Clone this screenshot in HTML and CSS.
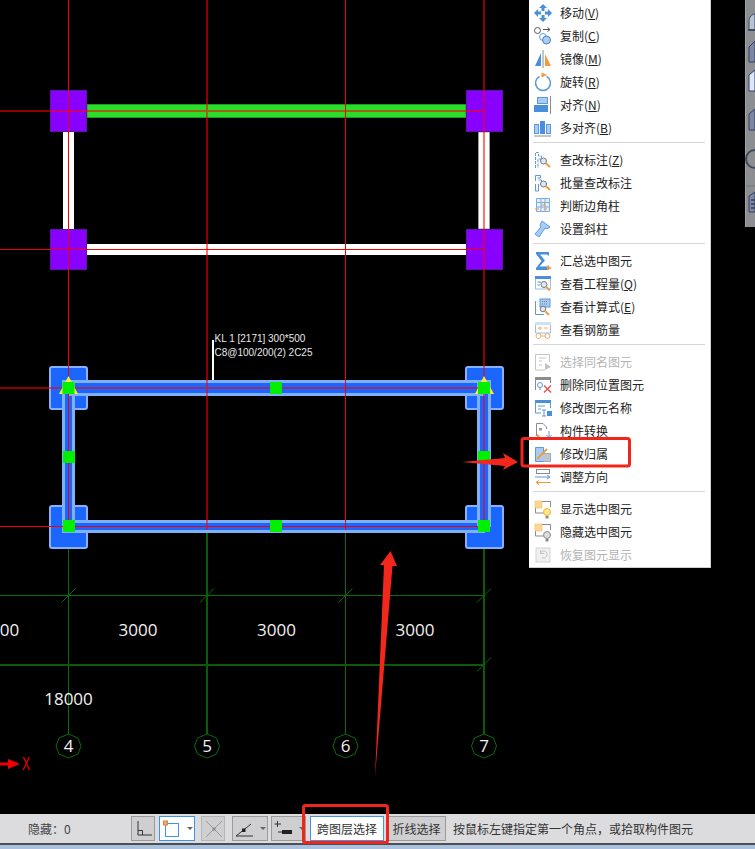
FILE: index.html
```html
<!DOCTYPE html>
<html lang="zh-CN">
<head>
<meta charset="utf-8">
<title>构件选择</title>
<link rel="stylesheet" href="styles.css">
</head>
<body>
<div class="app">
  <main class="stage">
    <svg class="canvas" width="755" height="814" viewBox="0 0 755 814">
      <!-- axis lines, lower green part -->
      <g class="axis-green">
        <path d="M68.5 530V734M345.5 530V734"/>
        <path class="thick" d="M207 530V734M484 530V734"/>
        <path d="M0 595.5H484"/>
        <path class="thick" d="M0 665H484"/>
        <path d="M61.5 602.5l14-14M200 602.5l14-14M338.5 602.5l14-14M477 602.5l14-14M477 671.5l14-14"/>
      </g>
      <!-- axis bubbles -->
      <g class="bubble">
        <polygon points="68.5,734 78,738 81,746 78,754 68.5,758 59,754 56,746 59,738"/>
        <polygon points="207,734 216.500,738 219.500,746 216.500,754 207,758 197.500,754 194.500,746 197.500,738"/>
        <polygon points="345.500,734 355,738 358,746 355,754 345.500,758 336,754 333,746 336,738"/>
        <polygon points="484,734 493.500,738 496.500,746 493.500,754 484,758 474.500,754 471.500,746 474.500,738"/>
      </g>
      <!-- upper frame -->
      <rect class="beam-green" x="87" y="104.500" width="379" height="13"/>
      <rect class="beam-white" x="87" y="244" width="379" height="11"/>
      <rect class="beam-white" x="63" y="132" width="11" height="97"/>
      <rect class="beam-white edged" x="478.500" y="132" width="11" height="97"/>
      <rect class="col-purple" x="50.500" y="90.500" width="36" height="41"/>
      <rect class="col-purple" x="466.500" y="90.500" width="36" height="41"/>
      <rect class="col-purple" x="50.500" y="229.500" width="36" height="40"/>
      <rect class="col-purple" x="466.500" y="229.500" width="36" height="40"/>
      <!-- lower selected frame -->
      <rect class="sel" x="50" y="367" width="37" height="42" rx="2"/>
      <rect class="sel" x="466" y="367" width="37" height="42" rx="2"/>
      <rect class="sel" x="50" y="506" width="37" height="42" rx="2"/>
      <rect class="sel" x="466" y="506" width="37" height="42" rx="2"/>
      <g class="beam-fill">
        <rect x="63.500" y="381.500" width="10" height="150"/>
        <rect x="478.500" y="381.500" width="11" height="144"/>
        <rect x="69.500" y="381.500" width="414" height="13"/>
        <rect x="69.500" y="521.500" width="414" height="10"/>
      </g>
      <g class="beam-edge">
        <rect x="63.500" y="381.500" width="10" height="150"/>
        <rect x="478.500" y="381.500" width="11" height="144"/>
        <rect x="69.500" y="381.500" width="414" height="13"/>
        <rect x="69.500" y="521.500" width="414" height="10"/>
      </g>
      <!-- axis lines over the members -->
      <g class="axis-red">
        <path d="M68.500 0V530M345.500 0V530M0 249.500H484M0 526.500H484"/>
      </g>
      <g class="axis-dark">
        <path d="M207 0V530M484 0V530M0 111H484M0 388H484"/>
      </g>
      <!-- handles -->
      <path class="tri-yellow" d="M68.500 376L78 394H59Z"/>
      <path class="tri-yellow" d="M484 376L494 394H475Z"/>
      <g class="handle">
        <rect x="62.500" y="382" width="12" height="12"/>
        <rect x="270" y="382" width="12" height="12"/>
        <rect x="478" y="382" width="12" height="12"/>
        <rect x="63" y="451" width="12" height="12"/>
        <rect x="478" y="451" width="12" height="12"/>
        <rect x="63" y="520" width="12" height="12"/>
        <rect x="270" y="520" width="12" height="12"/>
        <rect x="478" y="520" width="12" height="12"/>
      </g>
      <!-- annotation -->
      <path class="leader" d="M213 340V380"/>
      <text class="note" x="214.500" y="342">KL 1 [2171] 300*500</text>
      <text class="note" x="214.500" y="356">C8@100/200(2) 2C25</text>
      <!-- dimensions -->
      <g class="dim">
        <text x="9.500" y="636">00</text>
        <text x="138" y="636">3000</text>
        <text x="276.500" y="636">3000</text>
        <text x="415" y="636">3000</text>
        <text x="68.500" y="705">18000</text>
        <text x="68.500" y="752">4</text>
        <text x="207" y="752">5</text>
        <text x="345.500" y="752">6</text>
        <text x="484" y="752">7</text>
      </g>
      <!-- coordinate marker -->
      <path class="axis-arrow" d="M0 762.500H8V759L20 764L8 769V765.500H0Z"/>
      <text class="axis-x" x="22" y="770" textLength="8" lengthAdjust="spacingAndGlyphs">X</text>
    </svg>

    <aside class="side-panel">
      <svg width="10" height="227" viewBox="0 0 10 227">
        <path class="pi-fill" d="M4 21C4 17 7 14 10 14V30H4Z"/>
        <path class="pi-line" d="M3 30H10"/>
        <path class="pi-box" d="M4 62V47L10 41V62Z"/>
        <path class="pi-active" d="M4 91V75L10 70V91Z"/>
        <path class="pi-box" d="M4 130V114L10 109V130Z"/>
        <path class="pi-line" d="M10 150A9 9 0 0 0 10 168"/>
        <path class="pi-sep" d="M1 186H10"/>
        <path class="pi-box" d="M4 212V196L10 192V212Z"/>
        <path class="pi-dots" d="M6 200H10M6 204H10M6 208H10"/>
      </svg>
    </aside>

    <nav class="menu">
      <div class="item"><svg class="ico" viewBox="0 0 20 20"><path class="b" d="M10 1l4 4h-2.500v3h-3V5H6zM10 19l-4-4h2.500v-3h3v3H14zM1 10l4-4v2.500h3v3H5V14zM19 10l-4 4v-2.500h-3v-3h3V6z"/></svg><span>移动(<u>V</u>)</span></div>
      <div class="item"><svg class="ico" viewBox="0 0 20 20"><circle class="k" cx="4.500" cy="4.500" r="3"/><path class="k" d="M10 3.500h6.500M14.500 1.500l2.500 2-2.500 2"/><circle class="bl" cx="10" cy="11" r="3.500"/><circle class="blf" cx="13.500" cy="14" r="4"/></svg><span>复制(<u>C</u>)</span></div>
      <div class="item"><svg class="ico" viewBox="0 0 20 20"><path class="b" d="M2 17L8 4V17Z"/><path class="o" d="M12 5L18 17H12Z"/><path class="g" d="M10 1V19"/></svg><span>镜像(<u>M</u>)</span></div>
      <div class="item"><svg class="ico" viewBox="0 0 20 20"><path class="bl2" d="M6.500 4.300A7.500 7.500 0 1 0 13.500 4.300"/><path class="o" d="M8.500 0.500L14 3L8.500 5.500Z"/></svg><span>旋转(<u>R</u>)</span></div>
      <div class="item"><svg class="ico" viewBox="0 0 20 20"><rect class="lb" x="4.500" y="2.500" width="10" height="6"/><rect class="b" x="1" y="10" width="14" height="7"/><path class="g" d="M17.500 1V19"/></svg><span>对齐(<u>N</u>)</span></div>
      <div class="item"><svg class="ico" viewBox="0 0 20 20"><rect class="lb" x="1.500" y="6.500" width="4" height="9"/><rect class="b" x="7" y="3" width="5" height="13"/><rect class="lb" x="13.500" y="6.500" width="4" height="9"/><path class="g" d="M1 18H18"/></svg><span>多对齐(<u>B</u>)</span></div>
      <div class="sep"></div>
      <div class="item"><svg class="ico" viewBox="0 0 20 20"><path class="bl" d="M2.500 18V2.500H5.500V6H8.500V9H5V18" stroke-dasharray="3 1"/><circle class="glass" cx="10.500" cy="11" r="3"/><path class="oh" d="M13 13.500L17 17"/></svg><span>查改标注(<u>Z</u>)</span></div>
      <div class="item"><svg class="ico" viewBox="0 0 20 20"><path class="bl" d="M2.500 8V2.500H7.500V5H4.500M5.500 7H8.500V9M2.500 11V18H5.500V11"/><circle class="glass" cx="10.500" cy="11" r="3"/><path class="oh" d="M13 13.500L17 17"/></svg><span>批量查改标注</span></div>
      <div class="item"><svg class="ico" viewBox="0 0 20 20"><path class="grid" d="M3.500 2.500H16.500V15.500H3.500ZM3.500 6.500H16.500M3.500 11H16.500M8 2.500V15.500M12 2.500V15.500"/><path class="oh2" d="M2 13H6M8 9H11M11 13H14M11.500 7V11"/></svg><span>判断边角柱</span></div>
      <div class="item"><svg class="ico" viewBox="0 0 20 20"><path class="lbw" d="M9 2L17 8L14 10L12 9L6 18L2 15L8 8L7 6Z"/></svg><span>设置斜柱</span></div>
      <div class="sep"></div>
      <div class="item"><svg class="ico" viewBox="0 0 20 20"><path class="b" d="M3 1H16V5L14 3.500H7L12 9.500L6.500 15.500H14.500L16 14V19H3V17L8.500 10L3 3Z"/><path class="o" d="M14 14.500L19 17L14 19.500Z"/></svg><span>汇总选中图元</span></div>
      <div class="item"><svg class="ico" viewBox="0 0 20 20"><path class="win" d="M2.500 2.500H17.500V15H2.500Z"/><rect class="b" x="2" y="2" width="16" height="3"/><path class="bl" d="M4.500 8H8M4.500 11H7"/><circle class="glass" cx="11" cy="10.500" r="3"/><path class="oh" d="M13.500 13L17 16.500"/></svg><span>查看工程量(<u>Q</u>)</span></div>
      <div class="item"><svg class="ico" viewBox="0 0 20 20"><path class="bl" d="M2.500 4V17.500H11"/><rect class="lb" x="7" y="2" width="10" height="8"/><path class="dotk" d="M9 4.500H15M9 7H15"/><circle class="glass" cx="10" cy="12" r="2.800"/><path class="oh" d="M12.500 14.500L16 18"/></svg><span>查看计算式(<u>E</u>)</span></div>
      <div class="item"><svg class="ico" viewBox="0 0 20 20"><path class="win" d="M2.500 2.500H17.500V13H2.500Z"/><rect class="lb2" x="2" y="2" width="16" height="3"/><path class="ol" d="M5 8H9M7 6.500V10M11 8H15"/><circle class="ol" cx="5.500" cy="16" r="2.500"/><circle class="ol" cx="14.500" cy="16" r="2.500"/><path class="ol" d="M8 16H12"/></svg><span>查看钢筋量</span></div>
      <div class="sep"></div>
      <div class="item off"><svg class="ico" viewBox="0 0 20 20"><path class="dis" d="M2.500 2.500H16.500V10M12 18H2.500V2.500M6 6H13M6 9H9M6 13H9"/><path class="disf" d="M12 11L18 15L12 18Z"/></svg><span>选择同名图元</span></div>
      <div class="item"><svg class="ico" viewBox="0 0 20 20"><path class="g" d="M2.500 15V2.500H17.500V8"/><rect class="gf" x="2" y="2" width="16" height="3"/><circle class="bl" cx="7" cy="10" r="2.500"/><path class="bl" d="M7 12.500V15"/><path class="x" d="M11 10.500L18 17.500M18 10.500L11 17.500"/></svg><span>删除同位置图元</span></div>
      <div class="item"><svg class="ico" viewBox="0 0 20 20"><path class="bl" d="M2.500 2.500H17.500V10M8 15H2.500V2.500"/><rect class="b" x="2" y="2" width="16" height="3"/><path class="bl" d="M5 8H12M5 11H8"/><path class="bl" d="M9 12H13M11 12V18M9 18H13"/><rect class="b" x="14" y="13" width="5" height="5"/></svg><span>修改图元名称</span></div>
      <div class="item"><svg class="ico" viewBox="0 0 20 20"><path class="g" d="M3.500 15V2.500H10L13.500 6V8"/><path class="gfl" d="M6 7H9V9.500H6Z"/><path class="o" d="M4 13L7 15L4 17Z"/><path class="bl" d="M16 10V16M13.500 14L16 16.800L18.500 14"/></svg><span>构件转换</span></div>
      <div class="item"><svg class="ico" viewBox="0 0 20 20"><path class="lb" d="M2.500 3.500H10.500V9.500H17.500V17.500H2.500Z"/><rect class="gf2" x="10.500" y="9.500" width="7" height="8"/><path class="oh" d="M6 13L14 5"/><path class="o" d="M5 12L7 14.500L3.500 15.500Z"/></svg><span>修改归属</span></div>
      <div class="item"><svg class="ico" viewBox="0 0 20 20"><rect class="g" x="3.500" y="2.500" width="13" height="4"/><path class="bl" d="M2 10H17M14 8L17 10L14 12"/><path class="oh1" d="M18 15.500H3M6 13.500L3 15.500L6 17.500"/></svg><span>调整方向</span></div>
      <div class="sep"></div>
      <div class="item"><svg class="ico" viewBox="0 0 20 20"><path class="g" d="M2.500 14V2.500H17.500V8M2.500 14H11"/><rect class="yo" x="2" y="2" width="7" height="7"/><circle class="bulb" cx="14" cy="13" r="3.500"/><rect class="gf" x="12.500" y="17" width="3" height="2.500"/></svg><span>显示选中图元</span></div>
      <div class="item"><svg class="ico" viewBox="0 0 20 20"><path class="g" d="M2.500 14V2.500H17.500V8M2.500 14H11"/><rect class="yo" x="2" y="2" width="7" height="7"/><circle class="bulb-off" cx="14" cy="13" r="3.500"/><rect class="gf" x="12.500" y="17" width="3" height="2.500"/></svg><span>隐藏选中图元</span></div>
      <div class="item off"><svg class="ico" viewBox="0 0 20 20"><rect class="disbox" x="3" y="3" width="14" height="14"/><path class="dis" d="M7.500 8A3.500 3.500 0 1 1 9 12.500M7.500 5V8.500H11"/></svg><span>恢复图元显示</span></div>
    </nav>
  </main>

  <footer class="status">
    <span class="hidden-count">隐藏<span class="colon">：</span>0</span>
    <button class="tool t1"><svg width="22" height="22" viewBox="0 0 22 22"><path class="st" d="M5 3V17H19M9.500 17V12.500H5"/></svg></button>
    <button class="tool t2 on"><svg width="22" height="22" viewBox="0 0 22 22"><rect class="st-bl" x="4.500" y="5.500" width="13" height="13"/><rect class="st-o" x="2.500" y="3" width="4" height="4"/></svg><i class="caret"></i></button>
    <button class="tool t3"><svg width="22" height="22" viewBox="0 0 22 22"><path class="st-dis" d="M3 3L19 19M19 3L3 19"/><rect class="fill-dis" x="9.500" y="9.500" width="3" height="3"/></svg></button>
    <button class="tool t4"><svg width="22" height="22" viewBox="0 0 22 22"><path class="st" d="M2 18H19M2 18L17 6"/><rect class="fill-k" x="8" y="10.500" width="3.500" height="3.500"/></svg><i class="caret"></i></button>
    <button class="tool t5"><svg width="22" height="22" viewBox="0 0 22 22"><path class="st" d="M1.500 6H8M4.500 3V9"/><rect class="fill-k" x="9" y="12" width="10" height="4"/><path class="st" d="M5 14H9"/></svg><i class="caret"></i></button>
    <button class="tool text on t6">跨图层选择</button>
    <button class="tool text t7">折线选择</button>
    <span class="hint">按鼠标左键指定第一个角点，或拾取构件图元</span>
  </footer>
  <div class="rule"></div>
  <div class="taskstrip"></div>

  <svg class="marks" width="755" height="849" viewBox="0 0 755 849">
    <rect class="mark-box" x="522" y="438.500" width="107.500" height="27.500" rx="2"/>
    <rect class="mark-box" x="303.500" y="805.500" width="84" height="37" rx="2"/>
    <path class="mark-arrow" d="M375 777L384 565H380L390.500 551L397 566H392.500Z"/>
    <path class="mark-arrow" d="M462 462L505 458L503 453L518 462L503 470L505 466Z"/>
  </svg>
</div>
</body>
</html>
```

FILE: styles.css
```css
* { box-sizing: border-box; }
html, body { margin: 0; padding: 0; background: #000; }
body {
  width: 755px;
  height: 849px;
  overflow: hidden;
  font-family: "Noto Sans CJK SC", "Liberation Sans", sans-serif;
  font-size: 12px;
  color: #222;
}
.app { position: relative; width: 755px; height: 849px; display: flex; flex-direction: column; }
.stage { position: relative; height: 814px; flex: none; background: #000; }
.canvas { display: block; }

/* canvas drawing */
.axis-green path { fill: none; stroke: #0b6b0b; stroke-width: 1; }
.axis-green .thick { stroke: #0a5a0a; stroke-width: 2; }
.bubble polygon { fill: none; stroke: #0b6b0b; stroke-width: 1; }
.beam-green { fill: #2bdd2b; stroke: #1f9a1f; stroke-width: 1; }
.beam-white { fill: #fff; }
.beam-white.edged { stroke: #9a9a9a; stroke-width: 1; }
.col-purple { fill: #8800ff; stroke: #5d14a8; stroke-width: 1; }
.sel { fill: #1a66ff; stroke: #86b2fb; stroke-width: 2; }
.beam-fill rect { fill: #1a66ff; }
.beam-edge rect { fill: none; stroke: #7fb0fb; stroke-width: 3; }
.axis-red path { fill: none; stroke: #f00000; stroke-width: 1; }
.axis-dark path { fill: none; stroke: #ff0000; stroke-opacity: .55; stroke-width: 2; }
.tri-yellow { fill: #ffee33; }
.handle rect { fill: #00f000; }
.leader { stroke: #fff; stroke-width: 2; fill: none; }
.note { fill: #e8e8e8; font-family: "Liberation Sans", sans-serif; font-size: 10px; }
.dim text { fill: #f0f0f0; font-family: "Open Sans", sans-serif; font-size: 17px; text-anchor: middle; }
.axis-arrow { fill: #f00000; }
.axis-x { fill: #f00000; font-family: "Liberation Sans", sans-serif; font-size: 18px; }

/* side panel */
.side-panel { position: absolute; left: 745px; top: 0; width: 10px; height: 227px; background: #8d8e92; border-left: 1px solid #a0a1a4; }
.side-panel svg { display: block; margin-left: -1px; }
.pi-fill { fill: #b9c2d3; stroke: #3f4a60; stroke-width: 1; }
.pi-line { fill: none; stroke: #3f4a60; stroke-width: 2; }
.pi-box { fill: #7c88a3; stroke: #34405a; stroke-width: 1; }
.pi-active { fill: #dde7fa; stroke: #34405a; stroke-width: 1; }
.pi-sep { stroke: #777; stroke-width: 1; }
.pi-dots { stroke: #34405a; stroke-width: 1.500; fill: none; }

/* context menu */
.menu {
  position: absolute;
  left: 529px;
  top: 0;
  width: 182px;
  height: 568px;
  padding: 1px 0 1px;
  background: #fff;
  border-right: 1px solid #cfcfcf;
  border-bottom: 1px solid #cfcfcf;
  display: flex;
  flex-direction: column;
}
.item { height: 23px; flex: none; display: flex; align-items: center; padding-left: 4px; gap: 7px; line-height: 23px; color: #222; white-space: nowrap; }
.item.off { color: #b4b4b4; }
.item u { text-underline-offset: 1px; }
.ico { width: 20px; height: 20px; flex: none; }
.sep { height: 1px; margin: 3px 5px 5px 4px; background: #d6d6d6; flex: none; }

.ico .b { fill: #4a8fdc; }
.ico .o { fill: #f29a3c; }
.ico .g { fill: none; stroke: #8c8c8c; stroke-width: 1; }
.ico .k { fill: none; stroke: #555; stroke-width: 1; }
.ico .bl { fill: none; stroke: #5b9ade; stroke-width: 1; }
.ico .bl2 { fill: none; stroke: #5b9ade; stroke-width: 1.500; }
.ico .blf { fill: #a9ccf2; stroke: #4a80c0; stroke-width: 1; }
.ico .glass { fill: #dbe9f8; stroke: #777; stroke-width: 1; }
.ico .grid { fill: #e4effb; stroke: #7aaee6; stroke-width: 1; }
.ico .lb { fill: #a9ccf2; stroke: #5b9ade; stroke-width: 1; }
.ico .lb2 { fill: #cfe0f3; }
.ico .lbw { fill: #a9ccf2; stroke: #5b9ade; stroke-width: 1; }
.ico .oh { fill: none; stroke: #f29a3c; stroke-width: 2; }
.ico .oh1 { fill: none; stroke: #f29a3c; stroke-width: 1; }
.ico .oh2 { fill: none; stroke: #f29a3c; stroke-width: 1; }
.ico .ol { fill: none; stroke: #f2ac6c; stroke-width: 1; }
.ico .win { fill: #fff; stroke: #9cbfe6; stroke-width: 1; }
.ico .dotk { fill: none; stroke: #777; stroke-width: 1; stroke-dasharray: 1 1; }
.ico .gf { fill: #8c8c8c; }
.ico .gf2 { fill: #c4c4c4; }
.ico .gfl { fill: #9a9a9a; }
.ico .x { fill: none; stroke: #e2574c; stroke-width: 1.500; }
.ico .yo { fill: #fbd98a; stroke: #f2ac6c; stroke-width: .5; }
.ico .bulb { fill: #ffe88a; stroke: #e5b93c; stroke-width: 1; }
.ico .bulb-off { fill: #dcdcdc; stroke: #8c8c8c; stroke-width: 1; }
.ico .dis { fill: none; stroke: #c4c4c4; stroke-width: 1; }
.ico .disf { fill: #c4c4c4; }
.ico .disbox { fill: #f0f0f0; stroke: #d4d4d4; stroke-width: 1; }

/* status bar */
.status { height: 29px; flex: none; position: relative; background: #dcdcde; display: flex; align-items: center; color: #333; }
.hidden-count { margin-left: 28px; width: 103px; flex: none; color: #444; }
.colon { font-family: "Noto Sans CJK TC", sans-serif; }
.tool {
  height: 25px;
  padding: 0;
  border: 1px solid #9a9a9a;
  background: #cfcfd1;
  font: inherit;
  color: #333;
  display: flex;
  align-items: center;
  justify-content: flex-start;
  flex: none;
}
.tool svg { display: block; flex: none; }
.tool.on { background: #fff; border-color: #3d94e8; }
.tool.text { justify-content: center; }
.t1 { width: 24px; margin-right: 4px; padding-left: 1px; }
.t2 { width: 36px; margin-right: 6px; padding-left: 1px; }
.t3 { width: 24px; margin-right: 7px; padding-left: 1px; border-color: #b4b4b4; }
.t4 { width: 36px; margin-right: 3px; padding-left: 1px; }
.t5 { width: 35px; margin-right: 4px; padding-left: 1px; }
.t6 { width: 74px; margin-right: 3px; }
.t7 { width: 59px; margin-right: 7px; }
.caret { width: 0; height: 0; margin-left: 4px; border-left: 3px solid transparent; border-right: 3px solid transparent; border-top: 3px solid #666; }
.st { fill: none; stroke: #333; stroke-width: 1; }
.st-bl { fill: #fff; stroke: #3d94e8; stroke-width: 1; }
.st-o { fill: #f4a868; stroke: #e07f33; stroke-width: 1; }
.st-dis { fill: none; stroke: #9a9a9a; stroke-width: 1; }
.fill-dis { fill: #8c8c8c; }
.fill-k { fill: #222; }
.hint { color: #333; white-space: nowrap; }
.rule { height: 2px; flex: none; background: #4d4e52; }
.taskstrip { flex: 1; background: #a9c0de; }

/* hand-drawn red annotations over everything */
.marks { position: absolute; left: 0; top: 0; pointer-events: none; }
.mark-box { fill: none; stroke: #f0261c; stroke-width: 3; }
.mark-arrow { fill: #f3271b; }
```
